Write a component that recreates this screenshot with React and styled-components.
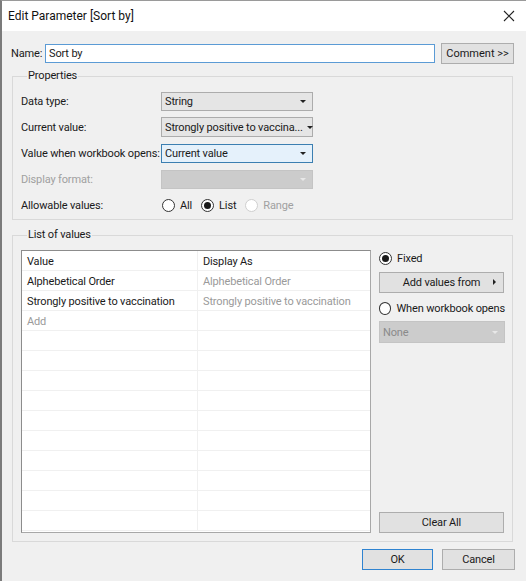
import React from "react";
import styled, { createGlobalStyle, css } from "styled-components";

const GlobalStyle = createGlobalStyle`
  html, body {
    margin: 0;
    padding: 0;
    background: #f0f0f0;
  }
  body {
    font-family: Roboto, "Liberation Sans", sans-serif;
    font-size: 11px;
    letter-spacing: -0.15px;
    color: #1a1a1a;
    white-space: nowrap;
  }
`;

const Window = styled.div`
  width: 526px;
  height: 581px;
  box-sizing: border-box;
  border-left: 2px solid #7b7b7b;
  border-top: 1px solid #9a9a9a;
  background: #f0f0f0;
  display: flex;
  flex-direction: column;
`;

const TitleBar = styled.div`
  height: 30px;
  background: #fff;
  display: flex;
  align-items: center;
  justify-content: space-between;
  padding: 0 10px 0 6px;
  font-size: 12px;
  letter-spacing: 0;
  color: #111;
`;

const CloseButton = styled.div`
  width: 14px;
  height: 14px;
  display: flex;
  align-items: center;
  justify-content: center;
`;

const Body = styled.div`
  flex: 1;
  padding: 12px 13px 0 10px;
  display: flex;
  flex-direction: column;
`;

const NameRow = styled.div`
  display: flex;
  align-items: center;
  height: 21px;
  margin-left: -1px;
`;

const NameLabel = styled.span`
  width: 34px;
`;

const TextInput = styled.div`
  width: 390px;
  height: 19px;
  box-sizing: border-box;
  border: 1px solid #5b9bd5;
  background: #fff;
  display: flex;
  align-items: center;
  padding-left: 3px;
`;

const Button = styled.div`
  box-sizing: border-box;
  height: ${(p) => p.h || 21}px;
  width: ${(p) => p.w}px;
  border: 1px solid ${(p) => (p.primary ? "#2f83d0" : "#adadad")};
  background: #e1e1e1;
  display: flex;
  align-items: center;
  justify-content: center;
  position: relative;
  flex-shrink: 0;
`;

const CommentButton = styled(Button)`
  margin-left: auto;
  margin-right: -1px;
  letter-spacing: 0;
`;

const Group = styled.fieldset`
  margin: ${(p) => p.top || 0}px 0 0 0;
  border: 1px solid #d9d9d9;
  padding: ${(p) => p.pad};
  min-width: 0;
`;

const Legend = styled.legend`
  padding: 0 1px;
  margin-left: 6px;
  line-height: 16px;
`;

const PropRow = styled.div`
  display: flex;
  align-items: center;
  height: 26px;
  color: ${(p) => (p.disabled ? "#a0a0a0" : "inherit")};
`;

const PropLabel = styled.span`
  width: 140px;
`;

const Select = styled.div`
  box-sizing: border-box;
  width: ${(p) => p.w || 152}px;
  height: ${(p) => p.h || 19}px;
  display: flex;
  align-items: center;
  justify-content: space-between;
  padding: 0 6px 0 3px;
  border: 1px solid #acacac;
  background: #e5e5e5;
  color: #1a1a1a;
  ${(p) =>
    p.focused &&
    css`
      background: #e5f1fb;
      border-color: #3c7fb1;
    `}
  ${(p) =>
    p.disabled &&
    css`
      background: #cccccc;
      border-color: #c4c4c4;
      color: #8a8a8a;
    `}
`;

const Caret = styled.span`
  flex-shrink: 0;
  margin-left: 4px;
  width: 0;
  height: 0;
  border-left: 3px solid transparent;
  border-right: 3px solid transparent;
  border-top: 3px solid ${(p) => (p.faded ? "#e8e8e8" : "#222")};
`;

const RadioGroup = styled.div`
  display: flex;
  align-items: center;
  gap: 9px;
  margin-left: 1px;
`;

const RadioItem = styled.label`
  display: flex;
  align-items: center;
  gap: 5px;
  color: ${(p) => (p.disabled ? "#a0a0a0" : "inherit")};
`;

const RadioCircle = styled.span`
  box-sizing: border-box;
  width: 13px;
  height: 13px;
  border-radius: 50%;
  border: 1px solid ${(p) => (p.disabled ? "#cfcfcf" : "#333")};
  background: #fff;
  display: flex;
  align-items: center;
  justify-content: center;
  &::after {
    content: "";
    width: 7px;
    height: 7px;
    border-radius: 50%;
    background: ${(p) => (p.checked ? "#1a1a1a" : "transparent")};
  }
`;

const ListArea = styled.div`
  display: flex;
  gap: 8px;
`;

const Table = styled.div`
  width: 351px;
  height: 283px;
  box-sizing: border-box;
  border: 1px solid #a8a8a8;
  border-left-color: #8c8c8c;
  border-top-color: #8c8c8c;
  background: #fff;
  overflow: hidden;
`;

const TRow = styled.div`
  display: grid;
  grid-template-columns: 175px 1fr;
  height: 20px;
  box-sizing: border-box;
  border-bottom: 1px solid #f0f0f0;
`;

const TCell = styled.div`
  display: flex;
  align-items: center;
  padding-left: 5px;
  padding-top: 1px;
  color: ${(p) => (p.muted ? "#9a9a9a" : "#1a1a1a")};
  & + & {
    border-left: 1px solid #f0f0f0;
  }
`;

const SideColumn = styled.div`
  width: 126px;
  display: flex;
  flex-direction: column;
`;

const SideRadio = styled(RadioItem)`
  height: 14px;
  margin: ${(p) => p.m};
`;

const ArrowRight = styled.span`
  position: absolute;
  right: 7px;
  top: 6px;
  width: 0;
  height: 0;
  border-top: 3px solid transparent;
  border-bottom: 3px solid transparent;
  border-left: 3px solid #222;
`;

const Spacer = styled.div`
  flex: 1;
`;

const Footer = styled.div`
  display: flex;
  justify-content: flex-end;
  gap: 9px;
  padding: 7px 0 0;
  margin-right: -2px;
`;

const rows = [
  ["Value", "Display As", false, false],
  ["Alphebetical Order", "Alphebetical Order", false, true],
  ["Strongly positive to vaccination", "Strongly positive to vaccination", false, true],
  ["Add", "", true, false],
];

export default function App() {
  const blanks = Array.from({ length: 10 });
  return (
    <>
      <GlobalStyle />
      <Window>
        <TitleBar>
          <span>Edit Parameter [Sort by]</span>
          <CloseButton>
            <svg width="12" height="12" viewBox="0 0 12 12">
              <path d="M1 1L11 11M11 1L1 11" stroke="#222" strokeWidth="1.1" />
            </svg>
          </CloseButton>
        </TitleBar>
        <Body>
          <NameRow>
            <NameLabel>Name:</NameLabel>
            <TextInput>Sort by</TextInput>
            <CommentButton w={73}>Comment &gt;&gt;</CommentButton>
          </NameRow>

          <Group top={4} pad="4px 8px 1px 8px">
            <Legend>Properties</Legend>
            <PropRow>
              <PropLabel>Data type:</PropLabel>
              <Select>
                String
                <Caret />
              </Select>
            </PropRow>
            <PropRow>
              <PropLabel>Current value:</PropLabel>
              <Select h={20}>
                Strongly positive to vaccina...
                <Caret />
              </Select>
            </PropRow>
            <PropRow>
              <PropLabel>Value when workbook opens:</PropLabel>
              <Select focused>
                Current value
                <Caret />
              </Select>
            </PropRow>
            <PropRow disabled>
              <PropLabel>Display format:</PropLabel>
              <Select disabled>
                <span />
                <Caret faded />
              </Select>
            </PropRow>
            <PropRow>
              <PropLabel>Allowable values:</PropLabel>
              <RadioGroup>
                <RadioItem>
                  <RadioCircle />
                  All
                </RadioItem>
                <RadioItem>
                  <RadioCircle checked />
                  List
                </RadioItem>
                <RadioItem disabled>
                  <RadioCircle disabled />
                  Range
                </RadioItem>
              </RadioGroup>
            </PropRow>
          </Group>

          <Group top={7} pad="7px 7px 8px 8px">
            <Legend>List of values</Legend>
            <ListArea>
              <Table>
                {rows.map(([a, b, mutedA, mutedB]) => (
                  <TRow key={a}>
                    <TCell muted={mutedA}>{a}</TCell>
                    <TCell muted={mutedB}>{b}</TCell>
                  </TRow>
                ))}
                {blanks.map((_, i) => (
                  <TRow key={i}>
                    <TCell />
                    <TCell />
                  </TRow>
                ))}
              </Table>
              <SideColumn>
                <SideRadio m="1px 0 7px 0">
                  <RadioCircle checked />
                  Fixed
                </SideRadio>
                <Button w={125}>
                  Add values from
                  <ArrowRight />
                </Button>
                <SideRadio m="8px 0 6px 0">
                  <RadioCircle />
                  When workbook opens
                </SideRadio>
                <Select disabled w={126} h={22}>
                  None
                  <Caret faded />
                </Select>
                <Spacer />
                <Button w={125}>Clear All</Button>
              </SideColumn>
            </ListArea>
          </Group>

          <Footer>
            <Button primary w={71}>
              OK
            </Button>
            <Button w={73}>Cancel</Button>
          </Footer>
        </Body>
      </Window>
    </>
  );
}
